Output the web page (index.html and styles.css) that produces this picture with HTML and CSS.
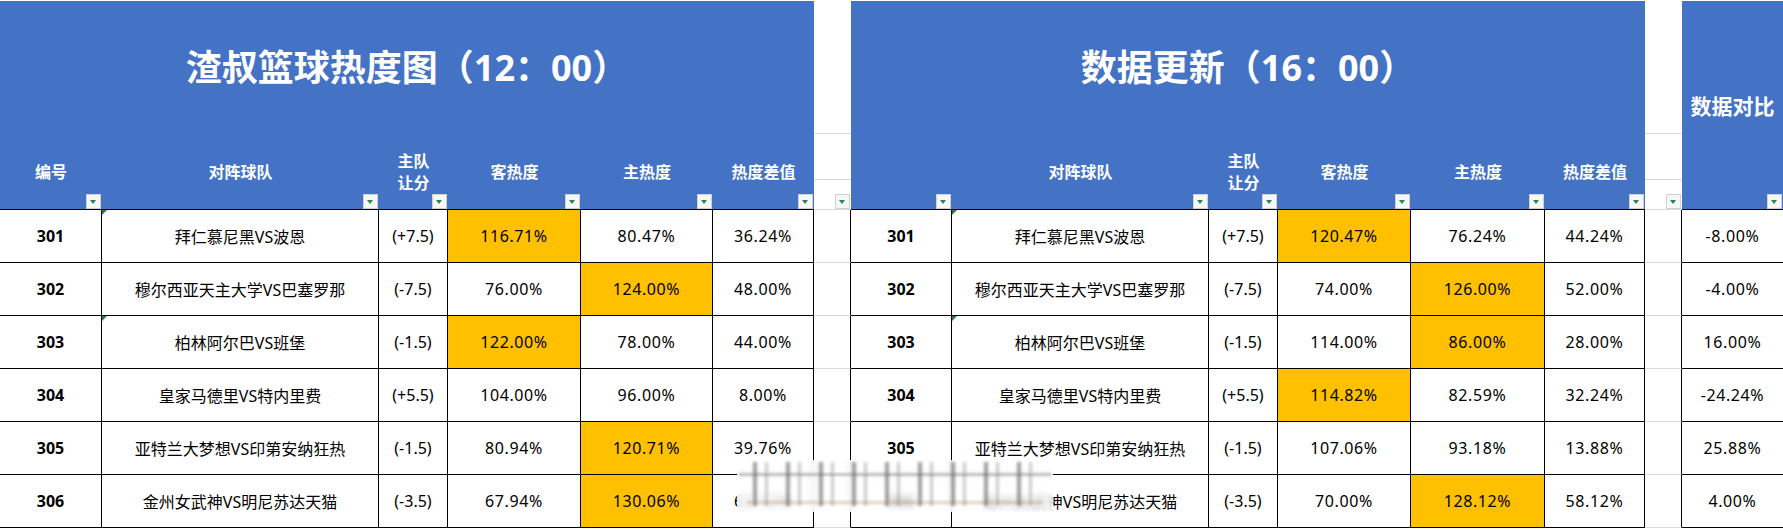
FILE: index.html
```html
<!DOCTYPE html>
<html lang="zh-CN">
<head>
<meta charset="utf-8">
<title>渣叔篮球热度图</title>
<link rel="stylesheet" href="styles.css">
</head>
<body>
<div class="sheet">
  <div class="title t-span">渣叔篮球热度图（12：00）</div>
  <div class="gap-top"></div>
  <div class="title t-span">数据更新（16：00）</div>
  <div class="gap-top"></div>
  <div class="cmp-head">数据对比<span class="dd"></span></div>

  <div class="lab">编号<span class="dd"></span></div>
  <div class="lab">对阵球队<span class="dd"></span></div>
  <div class="lab">主队<br>让分<span class="dd"></span></div>
  <div class="lab">客热度<span class="dd"></span></div>
  <div class="lab">主热度<span class="dd"></span></div>
  <div class="lab">热度差值<span class="dd"></span></div>
  <div class="gap-lab"><div class="gap-line"></div><span class="dd"></span></div>
  <div class="lab"><span class="dd"></span></div>
  <div class="lab">对阵球队<span class="dd"></span></div>
  <div class="lab">主队<br>让分<span class="dd"></span></div>
  <div class="lab">客热度<span class="dd"></span></div>
  <div class="lab">主热度<span class="dd"></span></div>
  <div class="lab">热度差值<span class="dd"></span></div>
  <div class="gap-lab"><div class="gap-line"></div><span class="dd"></span></div>

  <div class="c first id">301</div><div class="c flag">拜仁慕尼黑VS波恩</div><div class="c">(+7.5)</div><div class="c num hot">116.71%</div><div class="c num">80.47%</div><div class="c num">36.24%</div>
  <div class="gap"></div>
  <div class="c id">301</div><div class="c flag">拜仁慕尼黑VS波恩</div><div class="c">(+7.5)</div><div class="c num hot">120.47%</div><div class="c num">76.24%</div><div class="c num">44.24%</div>
  <div class="gap"></div><div class="cmp num">-8.00%</div>

  <div class="c first id">302</div><div class="c">穆尔西亚天主大学VS巴塞罗那</div><div class="c">(-7.5)</div><div class="c num">76.00%</div><div class="c num hot">124.00%</div><div class="c num">48.00%</div>
  <div class="gap"></div>
  <div class="c id">302</div><div class="c">穆尔西亚天主大学VS巴塞罗那</div><div class="c">(-7.5)</div><div class="c num">74.00%</div><div class="c num hot">126.00%</div><div class="c num">52.00%</div>
  <div class="gap"></div><div class="cmp num">-4.00%</div>

  <div class="c first id">303</div><div class="c flag">柏林阿尔巴VS班堡</div><div class="c">(-1.5)</div><div class="c num hot">122.00%</div><div class="c num">78.00%</div><div class="c num">44.00%</div>
  <div class="gap"></div>
  <div class="c id">303</div><div class="c flag">柏林阿尔巴VS班堡</div><div class="c">(-1.5)</div><div class="c num">114.00%</div><div class="c num hot">86.00%</div><div class="c num">28.00%</div>
  <div class="gap"></div><div class="cmp num">16.00%</div>

  <div class="c first id">304</div><div class="c">皇家马德里VS特内里费</div><div class="c">(+5.5)</div><div class="c num">104.00%</div><div class="c num">96.00%</div><div class="c num">8.00%</div>
  <div class="gap"></div>
  <div class="c id">304</div><div class="c">皇家马德里VS特内里费</div><div class="c">(+5.5)</div><div class="c num hot">114.82%</div><div class="c num">82.59%</div><div class="c num">32.24%</div>
  <div class="gap"></div><div class="cmp num">-24.24%</div>

  <div class="c first id">305</div><div class="c">亚特兰大梦想VS印第安纳狂热</div><div class="c">(-1.5)</div><div class="c num">80.94%</div><div class="c num hot">120.71%</div><div class="c num">39.76%</div>
  <div class="gap"></div>
  <div class="c id">305</div><div class="c">亚特兰大梦想VS印第安纳狂热</div><div class="c">(-1.5)</div><div class="c num">107.06%</div><div class="c num">93.18%</div><div class="c num">13.88%</div>
  <div class="gap"></div><div class="cmp num">25.88%</div>

  <div class="c first id">306</div><div class="c">金州女武神VS明尼苏达天猫</div><div class="c">(-3.5)</div><div class="c num">67.94%</div><div class="c num hot">130.06%</div><div class="c num">62.12%</div>
  <div class="gap"></div>
  <div class="c id">306</div><div class="c">金州女武神VS明尼苏达天猫</div><div class="c">(-3.5)</div><div class="c num">70.00%</div><div class="c num hot">128.12%</div><div class="c num">58.12%</div>
  <div class="gap"></div><div class="cmp num">4.00%</div>
</div>
<div class="watermark"><div class="wm-top"></div><div class="wm-strokes"></div><div class="wm-bottom"></div></div>
</body>
</html>
```
FILE: styles.css
```css
* { box-sizing: border-box; }
html, body { margin: 0; padding: 0; background: #fff; }
body {
  position: relative;
  padding-top: 1px;
  width: 1783px;
  height: 529px;
  overflow: hidden;
  font-family: "Noto Sans", "Noto Sans CJK SC", sans-serif;
  color: #000;
}
.sheet {
  display: grid;
  grid-template-columns: 102px 277px 69px 133px 132px 101px 37px 101px 257px 69px 133px 134px 100px 37px 101px;
  grid-template-rows: 133px 76px repeat(6, 53px);
}
.title {
  background: #4472c4;
  color: #fff;
  font-weight: 700;
  font-size: 36px;
  display: flex;
  align-items: center;
  justify-content: center;
  line-height: 1.2;
}
.t-span { grid-column: span 6; }
.gap-top {
  background: #fff;
  border-bottom: 1px solid #dadada;
}
.cmp-head {
  grid-row: span 2;
  position: relative;
  background: #4472c4;
  color: #fff;
  font-weight: 700;
  font-size: 21px;
  display: flex;
  align-items: center;
  justify-content: center;
  border-bottom: 1px solid #000;
}
.lab {
  position: relative;
  background: #4472c4;
  color: #fff;
  font-weight: 700;
  font-size: 16px;
  line-height: 22px;
  text-align: center;
  display: flex;
  align-items: center;
  justify-content: center;
  border-bottom: 1px solid #000;
}
.gap-lab {
  position: relative;
  background: #fff;
  border-bottom: 1px solid #dadada;
}
.gap-line {
  height: 46px;
  border-bottom: 1px solid #dadada;
}
.dd {
  position: absolute;
  right: 1px;
  bottom: 0;
  width: 15px;
  height: 15px;
  background: #f7f7f7;
  border: 1px solid #d0d0d0;
}
.dd::after {
  content: "";
  position: absolute;
  left: 3px;
  top: 5px;
  border-left: 3.5px solid transparent;
  border-right: 3.5px solid transparent;
  border-top: 4px solid #1f8a4c;
}
.c {
  position: relative;
  display: flex;
  align-items: center;
  justify-content: center;
  font-size: 16px;
  border-right: 1px solid #000;
  border-bottom: 1px solid #000;
  white-space: nowrap;
}
.id { font-weight: 700; }
.num { letter-spacing: 0.6px; }
.hot { background: #ffc000; }
.flag::before {
  content: "";
  position: absolute;
  top: 0;
  left: 0;
  border-top: 5px solid #2c7d3c;
  border-right: 5px solid transparent;
}
.gap {
  background: #fff;
  border-right: 1px solid #000;
  border-bottom: 1px solid #dadada;
}
.cmp {
  display: flex;
  align-items: center;
  justify-content: center;
  font-size: 16px;
  border-bottom: 1px solid #000;
}
.watermark {
  position: absolute;
  left: 737px;
  top: 460px;
  width: 316px;
  height: 52px;
  background: rgba(255, 255, 255, 0.75);
  backdrop-filter: blur(3px);
}
.wm-top {
  position: absolute;
  left: 2px;
  right: 2px;
  top: 13px;
  height: 3px;
  background: rgba(150, 150, 150, 0.55);
  filter: blur(1px);
}
.wm-strokes {
  position: absolute;
  inset: 2px 6px 6px 6px;
  background: repeating-linear-gradient(90deg, transparent 0 10px, rgba(95, 95, 95, 0.6) 10px 14px, transparent 14px 22px, rgba(140, 140, 140, 0.45) 22px 25px, transparent 25px 33px);
  filter: blur(1.6px);
}
.wm-bottom {
  position: absolute;
  left: 10px;
  right: 10px;
  bottom: 8px;
  height: 3px;
  background: rgba(170, 120, 80, 0.35);
  filter: blur(1.5px);
}
```
